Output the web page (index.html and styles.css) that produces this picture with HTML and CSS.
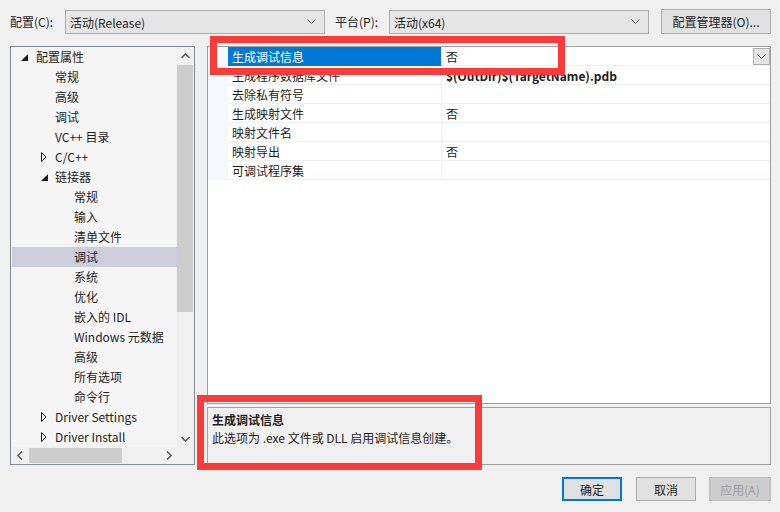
FILE: index.html
```html
<!DOCTYPE html>
<html lang="zh-CN">
<head>
<meta charset="utf-8">
<title>属性页</title>
<link rel="stylesheet" href="styles.css">
</head>
<body>
<div class="dialog">
  <div class="topbar">
    <span class="lbl lbl-conf">配置(C):</span>
    <div class="combo combo-conf"><span>活动(Release)</span><svg class="chev" width="9" height="6" viewBox="0 0 9 6"><path d="M0.5 0.5 L4.5 4.5 L8.5 0.5" fill="none" stroke="#555" stroke-width="1"/></svg></div>
    <span class="lbl lbl-plat">平台(P):</span>
    <div class="combo combo-plat"><span>活动(x64)</span><svg class="chev" width="9" height="6" viewBox="0 0 9 6"><path d="M0.5 0.5 L4.5 4.5 L8.5 0.5" fill="none" stroke="#555" stroke-width="1"/></svg></div>
    <div class="btn btn-mgr">配置管理器(O)...</div>
  </div>

  <div class="main">
    <div class="tree">
      <div class="tree-body">
        <ul class="tree-list">
          <li class="node l0"><svg class="exp" width="7" height="7" viewBox="0 0 7 7"><path d="M7 0 L7 7 L0 7 Z" fill="#1e1e1e"/></svg><span>配置属性</span></li>
          <li class="node l1"><span>常规</span></li>
          <li class="node l1"><span>高级</span></li>
          <li class="node l1"><span>调试</span></li>
          <li class="node l1"><span>VC++ 目录</span></li>
          <li class="node l1"><svg class="col" width="6" height="10" viewBox="0 0 6 10"><path d="M0.5 0.5 L5 5 L0.5 9.5 Z" fill="none" stroke="#1e1e1e" stroke-width="1"/></svg><span>C/C++</span></li>
          <li class="node l1"><svg class="exp" width="7" height="7" viewBox="0 0 7 7"><path d="M7 0 L7 7 L0 7 Z" fill="#1e1e1e"/></svg><span>链接器</span></li>
          <li class="node l2"><span>常规</span></li>
          <li class="node l2"><span>输入</span></li>
          <li class="node l2"><span>清单文件</span></li>
          <li class="node l2 sel"><span>调试</span></li>
          <li class="node l2"><span>系统</span></li>
          <li class="node l2"><span>优化</span></li>
          <li class="node l2"><span>嵌入的 IDL</span></li>
          <li class="node l2"><span>Windows 元数据</span></li>
          <li class="node l2"><span>高级</span></li>
          <li class="node l2"><span>所有选项</span></li>
          <li class="node l2"><span>命令行</span></li>
          <li class="node l1"><svg class="col" width="6" height="10" viewBox="0 0 6 10"><path d="M0.5 0.5 L5 5 L0.5 9.5 Z" fill="none" stroke="#1e1e1e" stroke-width="1"/></svg><span>Driver Settings</span></li>
          <li class="node l1"><svg class="col" width="6" height="10" viewBox="0 0 6 10"><path d="M0.5 0.5 L5 5 L0.5 9.5 Z" fill="none" stroke="#1e1e1e" stroke-width="1"/></svg><span>Driver Install</span></li>
        </ul>
        <div class="vscroll">
          <div class="sarrow"><svg width="9" height="6" viewBox="0 0 9 6"><path d="M0.5 5 L4.5 1 L8.5 5" fill="none" stroke="#606060" stroke-width="1.6"/></svg></div>
          <div class="vthumb"></div>
          <div class="vspace"></div>
          <div class="sarrow"><svg width="9" height="6" viewBox="0 0 9 6"><path d="M0.5 1 L4.5 5 L8.5 1" fill="none" stroke="#606060" stroke-width="1.6"/></svg></div>
        </div>
      </div>
      <div class="hrow">
        <div class="hscroll">
          <div class="harrow"><svg width="6" height="9" viewBox="0 0 6 9"><path d="M5 0.5 L1 4.5 L5 8.5" fill="none" stroke="#606060" stroke-width="1.6"/></svg></div>
          <div class="hthumb"></div>
          <div class="hspace"></div>
          <div class="harrow"><svg width="6" height="9" viewBox="0 0 6 9"><path d="M1 0.5 L5 4.5 L1 8.5" fill="none" stroke="#606060" stroke-width="1.6"/></svg></div>
        </div>
        <div class="corner"></div>
      </div>
    </div>

    <div class="right">
      <div class="grid">
        <div class="prow selrow"><div class="gut"></div><div class="pname">生成调试信息</div><div class="pval">否<div class="dd"><svg width="9" height="6" viewBox="0 0 9 6"><path d="M0.5 0.5 L4.5 4.5 L8.5 0.5" fill="none" stroke="#555" stroke-width="1"/></svg></div></div></div>
        <div class="prow"><div class="gut"></div><div class="pname">生成程序数据库文件</div><div class="pval bold">$(OutDir)$(TargetName).pdb</div></div>
        <div class="prow"><div class="gut"></div><div class="pname">去除私有符号</div><div class="pval"></div></div>
        <div class="prow"><div class="gut"></div><div class="pname">生成映射文件</div><div class="pval">否</div></div>
        <div class="prow"><div class="gut"></div><div class="pname">映射文件名</div><div class="pval"></div></div>
        <div class="prow"><div class="gut"></div><div class="pname">映射导出</div><div class="pval">否</div></div>
        <div class="prow"><div class="gut"></div><div class="pname">可调试程序集</div><div class="pval"></div></div>
      </div>
      <div class="desc">
        <div class="desc-title">生成调试信息</div>
        <div class="desc-text">此选项为 .exe 文件或 DLL 启用调试信息创建。</div>
      </div>
    </div>
  </div>

  <div class="buttons">
    <div class="btn btn-ok">确定</div>
    <div class="btn btn-cancel">取消</div>
    <div class="btn btn-apply">应用(A)</div>
  </div>

  <div class="mark mark-top"></div>
  <div class="mark mark-bottom"></div>
</div>
</body>
</html>
```

FILE: styles.css
```css
* { box-sizing: border-box; }
html, body {
  margin: 0;
  padding: 0;
  background: #f0f0f0;
}
body {
  font-family: "Noto Sans CJK SC", "Noto Sans", sans-serif;
  font-size: 12px;
  color: #1e1e1e;
}
.dialog {
  position: relative;
  width: 780px;
  height: 512px;
  overflow: hidden;
}

/* top bar */
.topbar {
  display: flex;
  align-items: center;
  height: 25px;
  margin-top: 9px;
  padding-left: 10px;
}
.lbl { line-height: 24px; }
.lbl-conf { width: 55px; }
.lbl-plat { width: 54px; margin-left: 10px; }
.combo {
  display: flex;
  align-items: center;
  justify-content: space-between;
  height: 24px;
  margin-top: 1px;
  width: 260px;
  padding: 0 8px 0 4px;
  background: #e5e5e5;
  border: 1px solid #adadad;
}
.chev { display: block; }
.btn {
  display: flex;
  align-items: center;
  justify-content: center;
  height: 25px;
  background: #e1e1e1;
  border: 1px solid #adadad;
}
.btn-mgr { width: 110px; margin-left: 12px; }

/* main */
.main {
  display: flex;
  margin-top: 12px;
  padding-left: 10px;
  height: 419px;
}
.tree {
  width: 185px;
  height: 419px;
  border: 1px solid #828790;
  display: flex;
  flex-direction: column;
  background: #f0f0f0;
}
.tree-body {
  display: flex;
  height: 400px;
}
.tree-list {
  list-style: none;
  margin: 0;
  padding: 0;
  width: 166px;
  background: #f5f5f5;
}
.node {
  position: relative;
  height: 20px;
  line-height: 20px;
  white-space: nowrap;
}
.node svg { position: absolute; top: 7px; }
.l0 span { padding-left: 25px; }
.l0 .exp { left: 10px; top: 7px; }
.l1 span { padding-left: 44px; }
.l1 .exp { left: 30px; top: 7px; }
.l1 .col { left: 30px; top: 5px; }
.l2 span { padding-left: 63px; }
.sel { background: #cccedb; margin-left: 1px; }
.sel span { padding-left: 62px; }

.vscroll {
  width: 17px;
  display: flex;
  flex-direction: column;
  background: #f0f0f0;
}
.sarrow {
  height: 17px;
  display: flex;
  align-items: center;
  justify-content: center;
}
.vthumb {
  height: 247px;
  margin: 1px 1px 0 0;
  background: #cdcdcd;
}
.vspace { flex: 1; }

.hrow {
  display: flex;
  height: 17px;
}
.hscroll {
  width: 166px;
  display: flex;
  background: #f0f0f0;
}
.harrow {
  width: 17px;
  display: flex;
  align-items: center;
  justify-content: center;
}
.hthumb {
  width: 93px;
  margin: 1px 0 1px 1px;
  background: #cdcdcd;
}
.hspace { flex: 1; }
.corner { width: 17px; background: #f0f0f0; }

/* right */
.right {
  margin-left: 12px;
  width: 564px;
  display: flex;
  flex-direction: column;
}
.grid {
  height: 358px;
  border: 1px solid #a0a0a0;
  background: #ffffff;
}
.prow {
  display: flex;
  height: 19px;
  line-height: 18px;
}
.gut {
  width: 20px;
  background: #f5f8fc;
}
.pname {
  width: 214px;
  padding: 1px 0 0 4px;
  border-bottom: 1px solid #eef1f6;
  border-right: 1px solid #eef1f6;
  white-space: nowrap;
  overflow: hidden;
}
.pval {
  flex: 1;
  position: relative;
  padding: 1px 0 0 4px;
  border-bottom: 1px solid #eef1f6;
  white-space: nowrap;
}
.bold { font-weight: bold; }
.selrow .pname {
  background: #0078d7;
  color: #ffffff;
  border-bottom-color: #0078d7;
}
.dd {
  position: absolute;
  right: 0;
  top: 1px;
  width: 17px;
  height: 17px;
  background: #e5e5e5;
  border: 1px solid #adadad;
  display: flex;
  align-items: center;
  justify-content: center;
}
.desc {
  margin-top: 3px;
  height: 58px;
  border: 1px solid #a0a0a0;
  background: #f0f0f0;
  padding: 3px 0 0 4px;
  line-height: 18px;
}
.desc-title { font-weight: bold; }

/* buttons */
.buttons {
  display: flex;
  justify-content: flex-end;
  margin-top: 12px;
  padding-right: 9px;
}
.buttons .btn { height: 24px; }
.btn-ok {
  width: 60px;
  border: 2px solid #0078d7;
}
.btn-cancel { width: 60px; margin-left: 14px; }
.btn-apply {
  width: 62px;
  margin-left: 13px;
  background: #cccccc;
  border-color: #bfbfbf;
  color: #a0a0a0;
}

/* annotation overlays */
.mark {
  position: absolute;
  border: 7px solid #fb3a3a;
}
.mark-top { left: 210px; top: 36px; width: 355px; height: 39px; }
.mark-bottom { left: 197px; top: 395px; width: 285px; height: 75px; }
```
